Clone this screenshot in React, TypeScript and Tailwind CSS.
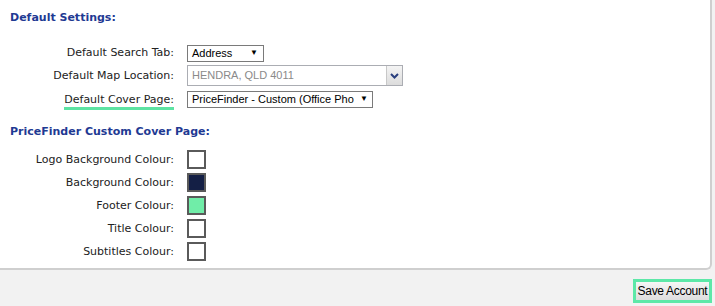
import React from "react";

const labelCls = "w-[176px] text-right pr-[2px] text-[11px] text-[#222] leading-[14px]";
const verdana = { fontFamily: '"DejaVu Sans", Verdana, sans-serif' };
const arial = { fontFamily: '"Liberation Sans", Arial, sans-serif' };

function Swatch({ color }: { color: string }) {
  return (
    <div className="w-[19px] h-[19px] border-2 border-[#5a5a5a]" style={{ background: color }} />
  );
}

export default function App() {
  const swatches = [
    ["Logo Background Colour:", "#ffffff"],
    ["Background Colour:", "#141f45"],
    ["Footer Colour:", "#70eda8"],
    ["Title Colour:", "#ffffff"],
    ["Subtitles Colour:", "#ffffff"],
  ];
  return (
    <div className="w-[715px] h-[306px] bg-[#f2f2f2] relative overflow-hidden" style={verdana}>
      <div className="w-[712px] h-[270px] bg-white border-r-2 border-b-2 border-[#cfcfcf] rounded-br-[6px] flex flex-col">
        <div className="pl-[10px] pt-[11px] text-[11px] font-bold text-[#1f3a93] leading-[14px]">Default Settings:</div>

        <div className="mt-[20px] flex items-center h-[16px]">
          <div className={labelCls}>Default Search Tab:</div>
          <div className="ml-[11px] w-[77px] h-[17px] border border-[#7a7a7a] bg-white flex items-center justify-between pl-[4px] pr-[5px] text-[11px] text-black" style={arial}>
            <span>Address</span>
            <span className="text-[8px]">▼</span>
          </div>
        </div>

        <div className="mt-[4px] flex items-center h-[21px]">
          <div className={labelCls}>Default Map Location:</div>
          <div className="ml-[11px] w-[216px] h-[21px] border border-[#abadb3] bg-white flex items-stretch text-[11px] text-[#8a8a8a]" style={arial}>
            <div className="flex-1 flex items-center pl-[4px]">HENDRA, QLD 4011</div>
            <div className="w-[16px] bg-gradient-to-b from-[#f4f4f4] to-[#dcdcdc] border-l border-[#c8c8c8] flex items-center justify-center">
              <svg width="9" height="6" viewBox="0 0 9 6">
                <path d="M1 1 L4.5 4.5 L8 1" stroke="#2a3f7e" strokeWidth="2" fill="none" />
              </svg>
            </div>
          </div>
        </div>

        <div className="mt-[5px] flex items-center h-[16px]">
          <div className="w-[176px] flex justify-end pr-[2px]">
            <span className="text-[11px] text-[#222] leading-[14px] border-b-[3px] border-[#5de3a3] translate-y-[2px]">Default Cover Page:</span>
          </div>
          <div className="ml-[11px] w-[186px] h-[17px] border border-[#7a7a7a] bg-white flex items-center justify-between pl-[4px] pr-[4px] text-[11px] text-black whitespace-nowrap" style={arial}>
            <span>PriceFinder - Custom (Office Pho</span>
            <span className="text-[8px]">▼</span>
          </div>
        </div>

        <div className="pl-[10px] mt-[18px] text-[11px] font-bold text-[#1f3a93] leading-[14px]">PriceFinder Custom Cover Page:</div>

        <div className="mt-[11px] flex flex-col gap-[4px]">
          {swatches.map(([l, c]) => (
            <div key={l} className="flex items-center h-[19px]">
              <div className={labelCls}>{l}</div>
              <div className="ml-[11px]">
                <Swatch color={c} />
              </div>
            </div>
          ))}
        </div>
      </div>

      <div className="flex justify-end pr-[3px] mt-[9px]">
        <div className="w-[79px] h-[24px] border-[3px] border-[#5de8a8] bg-gradient-to-b from-[#f6f6f6] to-[#dedede] flex items-center justify-center text-[12px] text-black whitespace-nowrap tracking-[-0.3px]" style={arial}>
          Save Account
        </div>
      </div>
    </div>
  );
}
